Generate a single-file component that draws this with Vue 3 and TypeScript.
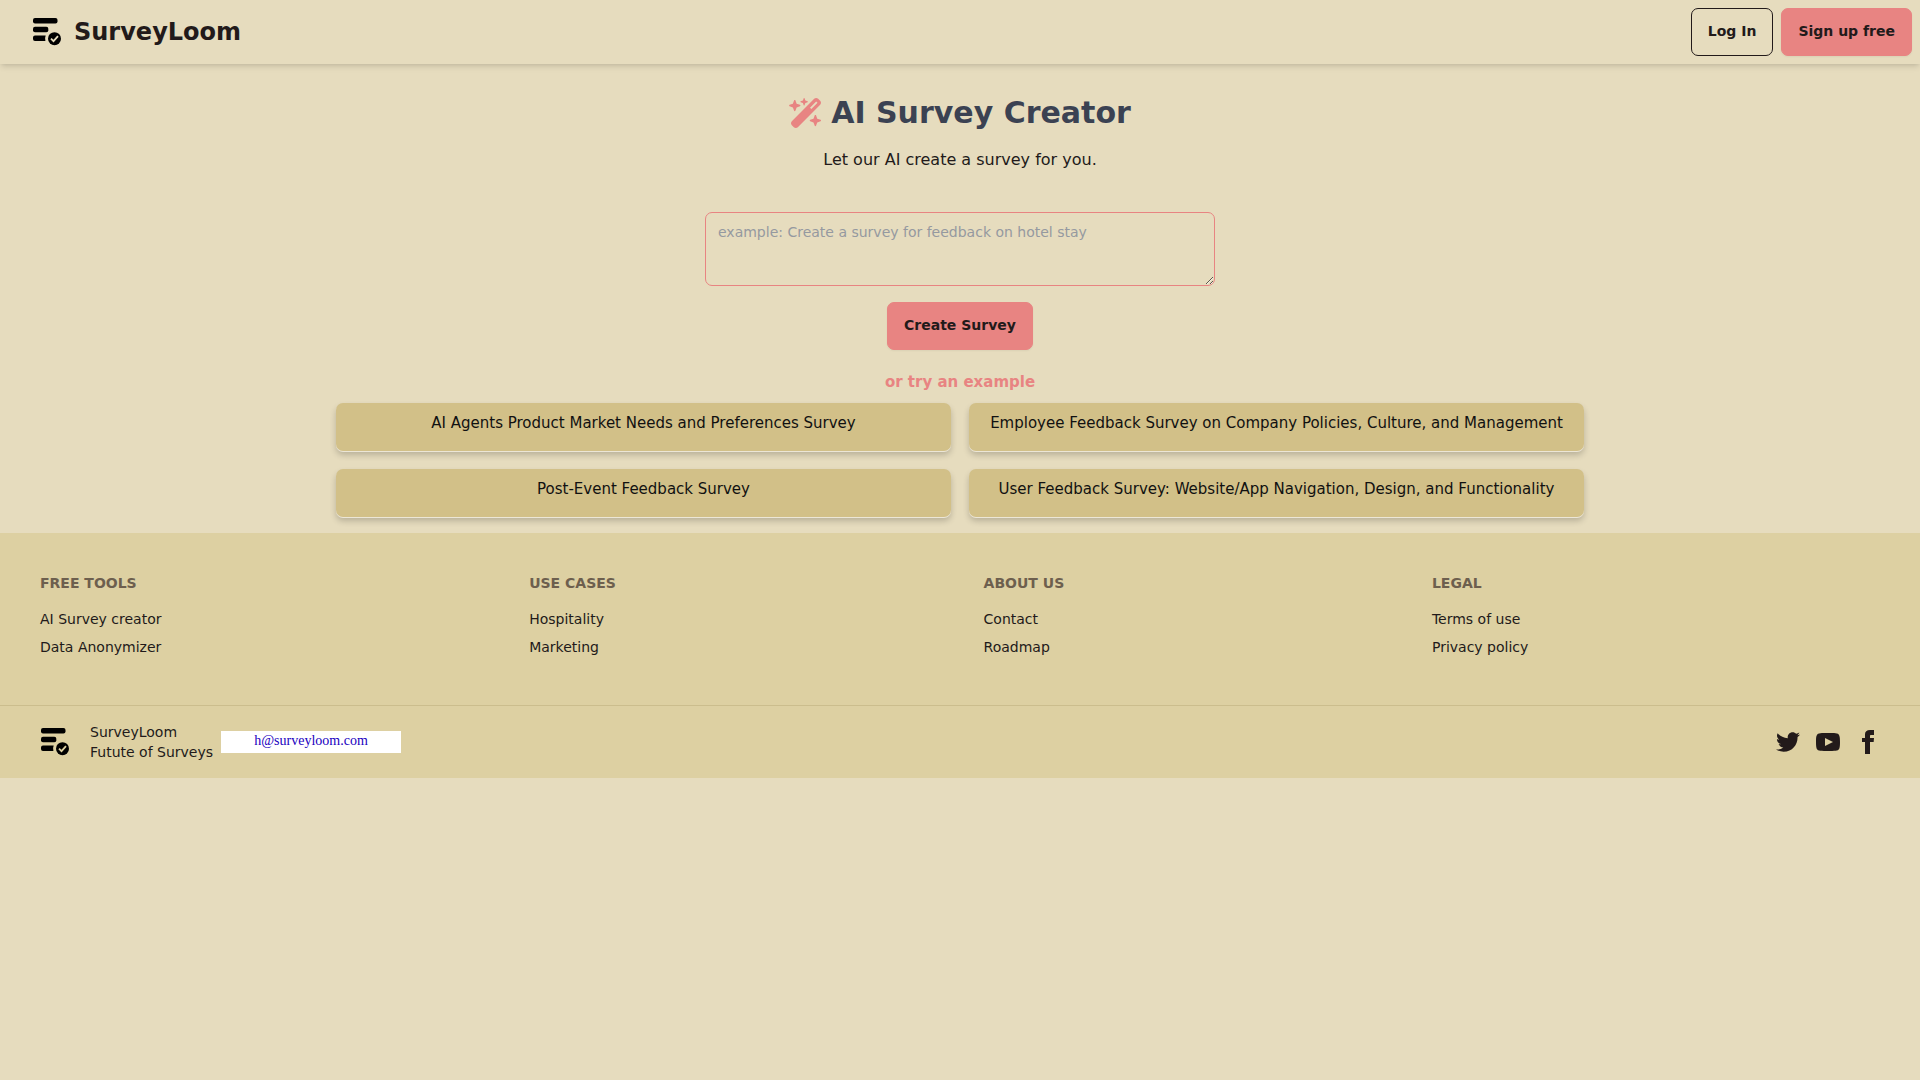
<script setup lang="ts">
import { ref } from 'vue'

interface FooterGroup {
  title: string
  links: string[]
}

const prompt = ref<string>('')

const examples: string[] = [
  'AI Agents Product Market Needs and Preferences Survey',
  'Employee Feedback Survey on Company Policies, Culture, and Management',
  'Post-Event Feedback Survey',
  'User Feedback Survey: Website/App Navigation, Design, and Functionality',
]

const groups: FooterGroup[] = [
  { title: 'Free tools', links: ['AI Survey creator', 'Data Anonymizer'] },
  { title: 'Use cases', links: ['Hospitality', 'Marketing'] },
  { title: 'About us', links: ['Contact', 'Roadmap'] },
  { title: 'Legal', links: ['Terms of use', 'Privacy policy'] },
]
</script>

<template>
  <div class="page">
    <header class="navbar">
      <a class="brand" href="#">
        <svg class="logo" viewBox="0 0 28 28" aria-hidden="true">
          <rect x="0" y="0" width="24.500" height="5.500" rx="2" />
          <rect x="0" y="8.700" width="15.300" height="5.500" rx="2" />
          <path d="M2 17.500h10.700a8 8 0 0 0-.3 5.500H2a2 2 0 0 1-2-2v-1.500a2 2 0 0 1 2-2z" />
          <circle cx="21.500" cy="20.700" r="6.500" />
          <path class="tick" d="M18 20.700l2.500 2.500 4.500-5" />
        </svg>
        SurveyLoom
      </a>
      <nav class="actions">
        <button class="btn outline" type="button">Log In</button>
        <button class="btn primary" type="button">Sign up free</button>
      </nav>
    </header>

    <main class="creator">
      <h1>
        <svg class="wand" viewBox="0 0 576 512" aria-hidden="true">
          <path d="M234.700 42.700L197 56.800c-3 1.100-5 4-5 7.200s2 6.100 5 7.200l37.700 14.100L248.800 123c1.100 3 4 5 7.200 5s6.100-2 7.200-5l14.100-37.700L315 71.200c3-1.100 5-4 5-7.200s-2-6.100-5-7.200L277.300 42.700 263.200 5c-1.100-3-4-5-7.200-5s-6.100 2-7.200 5L234.700 42.700zM46.100 395.400c-18.700 18.700-18.700 49.100 0 67.900l34.600 34.600c18.700 18.700 49.100 18.700 67.900 0L529.900 116.500c18.700-18.700 18.700-49.100 0-67.900L495.300 14.100c-18.700-18.700-49.100-18.700-67.900 0L46.100 395.400zM484.600 82.600l-105 105-23.300-23.300 105-105 23.300 23.300zM7.500 117.200C3 118.900 0 123.200 0 128s3 9.100 7.500 10.800L64 160l21.200 56.500c1.700 4.500 6 7.500 10.800 7.500s9.100-3 10.800-7.500L128 160l56.500-21.200c4.500-1.700 7.500-6 7.500-10.800s-3-9.100-7.500-10.800L128 96 106.800 39.500C105.100 35 100.800 32 96 32s-9.100 3-10.800 7.500L64 96 7.500 117.200zm352 256c-4.500 1.700-7.500 6-7.500 10.800s3 9.100 7.500 10.800L416 416l21.200 56.500c1.700 4.500 6 7.500 10.800 7.500s9.100-3 10.800-7.500L480 416l56.500-21.200c4.500-1.700 7.500-6 7.500-10.800s-3-9.100-7.500-10.800L480 352l-21.200-56.500c-1.700-4.500-6-7.500-10.800-7.500s-9.100 3-10.800 7.500L416 352l-56.500 21.200z" />
        </svg>
        AI Survey Creator
      </h1>
      <p class="lead">Let our AI create a survey for you.</p>
      <form class="prompt" @submit.prevent>
        <textarea
          v-model="prompt"
          aria-label="Survey description"
          placeholder="example: Create a survey for feedback on hotel stay"
        ></textarea>
        <button class="btn primary" type="submit">Create Survey</button>
      </form>
      <h2>or try an example</h2>
      <div class="examples">
        <button
          v-for="example in examples"
          :key="example"
          class="example"
          type="button"
          @click="prompt = example"
        >
          {{ example }}
        </button>
      </div>
    </main>

    <footer>
      <div class="links">
        <nav v-for="group in groups" :key="group.title" :aria-label="group.title">
          <h3>{{ group.title }}</h3>
          <a v-for="link in group.links" :key="link" href="#">{{ link }}</a>
        </nav>
      </div>
      <div class="bottom">
        <div class="about">
          <svg class="logo" viewBox="0 0 28 28" aria-hidden="true">
            <rect x="0" y="0" width="24.500" height="5.500" rx="2" />
            <rect x="0" y="8.700" width="15.300" height="5.500" rx="2" />
            <path d="M2 17.500h10.700a8 8 0 0 0-.3 5.500H2a2 2 0 0 1-2-2v-1.500a2 2 0 0 1 2-2z" />
            <circle cx="21.500" cy="20.700" r="6.500" />
            <path class="tick" d="M18 20.700l2.500 2.500 4.500-5" />
          </svg>
          <p>SurveyLoom<br />Futute of Surveys</p>
          <a class="email" href="mailto:h@surveyloom.com">h@surveyloom.com</a>
        </div>
        <nav class="social" aria-label="Social media">
          <a href="#" aria-label="Twitter">
            <svg viewBox="0 0 24 24"><path d="M24 4.557c-.883.392-1.832.656-2.828.775 1.017-.609 1.798-1.574 2.165-2.724-.951.564-2.005.974-3.127 1.195-.897-.957-2.178-1.555-3.594-1.555-3.179 0-5.515 2.966-4.797 6.045-4.091-.205-7.719-2.165-10.148-5.144-1.290 2.213-.669 5.108 1.523 6.574-.806-.026-1.566-.247-2.229-.616-.054 2.281 1.581 4.415 3.949 4.890-.693.188-1.452.232-2.224.084.626 1.956 2.444 3.379 4.600 3.419-2.070 1.623-4.678 2.348-7.290 2.040 2.179 1.397 4.768 2.212 7.548 2.212 9.142 0 14.307-7.721 13.995-14.646.962-.695 1.797-1.562 2.457-2.549z" /></svg>
          </a>
          <a href="#" aria-label="YouTube">
            <svg viewBox="0 0 24 24"><path d="M19.615 3.184c-3.604-.246-11.631-.245-15.230 0-3.897.266-4.356 2.620-4.385 8.816.029 6.185.484 8.549 4.385 8.816 3.600.245 11.626.246 15.230 0 3.897-.266 4.356-2.620 4.385-8.816-.029-6.185-.484-8.549-4.385-8.816zm-10.615 12.816v-8l8 3.993-8 4.007z" /></svg>
          </a>
          <a href="#" aria-label="Facebook">
            <svg viewBox="0 0 24 24"><path d="M9 8h-3v4h3v12h5v-12h3.642l.358-4h-4v-1.667c0-.955.192-1.333 1.115-1.333h2.885v-5h-3.808c-3.596 0-5.192 1.583-5.192 4.615v3.385z" /></svg>
          </a>
        </nav>
      </div>
    </footer>
  </div>
</template>

<style>
body {
  margin: 0;
  background: #e6dcbe;
}
</style>

<style scoped>
.page {
  color: #221a1a;
  font-family: 'DejaVu Sans', sans-serif;
  font-size: 16px;
  line-height: 24px;
}

.page * {
  box-sizing: border-box;
}

h1,
h2,
h3,
p {
  margin: 0;
}

a {
  color: inherit;
  text-decoration: none;
}

.navbar {
  display: flex;
  align-items: center;
  justify-content: space-between;
  min-height: 64px;
  padding: 8px;
  box-shadow: 0 4px 6px -1px rgba(0, 0, 0, 0.1), 0 2px 4px -2px rgba(0, 0, 0, 0.1);
}

.brand {
  display: flex;
  align-items: center;
  gap: 13px;
  padding-left: 25px;
  font-size: 24px;
  font-weight: 700;
  line-height: 32px;
}

.logo {
  width: 28px;
  height: 28px;
  flex: none;
  fill: #000;
}

.tick {
  fill: none;
  stroke: #e6dcbe;
  stroke-width: 1.8;
}

.actions {
  display: flex;
  gap: 8px;
}

.btn {
  height: 48px;
  padding: 0 16px 2px;
  border: 1px solid #e88482;
  border-radius: 7px;
  color: #221a1a;
  font-family: inherit;
  font-size: 14px;
  font-weight: 700;
  line-height: 14px;
}

.primary {
  background: #e88482;
  box-shadow: 0 1px 2px rgba(0, 0, 0, 0.05);
}

.outline {
  border-color: #221a1a;
  background: transparent;
}

.creator {
  display: flex;
  flex-direction: column;
  align-items: center;
  padding: 31px 16px 16px;
}

h1 {
  display: flex;
  align-items: center;
  gap: 8px;
  color: #3b4252;
  font-size: 30px;
  line-height: 36px;
}

.wand {
  width: 34px;
  height: 30px;
  fill: #e88482;
}

.lead {
  margin-top: 17px;
}

.prompt {
  display: flex;
  flex-direction: column;
  align-items: center;
  gap: 16px;
  width: 100%;
  max-width: 510px;
  margin-top: 40px;
}

textarea {
  display: block;
  width: 100%;
  height: 74px;
  padding: 9px 12px;
  border: 1px solid #e88482;
  border-radius: 7px;
  background: transparent;
  color: inherit;
  font-family: inherit;
  font-size: 14px;
  line-height: 20px;
}

textarea::placeholder {
  color: #9599a0;
}

h2 {
  margin-top: 20px;
  color: #e88482;
  font-size: 15px;
  line-height: 24px;
}

.examples {
  display: grid;
  grid-template-columns: 1fr 1fr;
  gap: 18px;
  width: 100%;
  max-width: 1248px;
  margin-top: 9px;
}

.example {
  display: flex;
  justify-content: center;
  min-height: 48px;
  padding: 8px 12px;
  border: 0;
  border-radius: 7px;
  background: #d2c088;
  box-shadow: 0 1px 0 #ece6d6, 0 4px 6px rgba(0, 0, 0, 0.2);
  color: #111;
  font-family: inherit;
  font-size: 15px;
  line-height: 24px;
}

footer {
  background: #ddd0a2;
  font-size: 14px;
  line-height: 20px;
}

.links {
  display: grid;
  grid-auto-flow: column;
  column-gap: 16px;
  padding: 40px 40px 48px;
}

.links nav {
  display: flex;
  flex-direction: column;
  align-items: flex-start;
  gap: 8px;
}

h3 {
  margin-bottom: 8px;
  color: #6d5f4e;
  font-size: 14px;
  line-height: 20px;
  text-transform: uppercase;
}

.bottom {
  display: flex;
  align-items: center;
  justify-content: space-between;
  padding: 16px 40px;
  border-top: 1px solid #cbbd8d;
}

.about {
  display: flex;
  align-items: center;
  gap: 8px;
}

.about .logo {
  margin: 0 13px 0 1px;
}

.about .tick {
  stroke: #ddd0a2;
}

.email {
  width: 180px;
  height: 22px;
  background: #fff;
  color: #2000c0;
  font-family: 'Liberation Serif', serif;
  font-size: 14px;
  line-height: 20px;
  text-align: center;
}

.social {
  display: flex;
  gap: 16px;
}

.social a,
.social svg {
  display: block;
  width: 24px;
  height: 24px;
  fill: currentColor;
}
</style>
